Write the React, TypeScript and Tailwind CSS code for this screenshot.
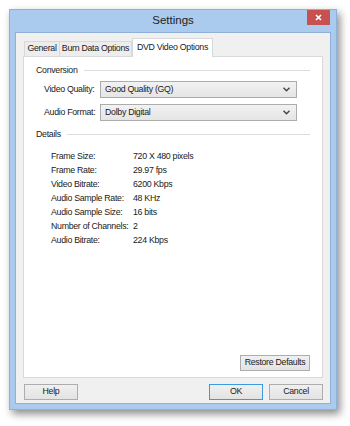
import React from "react";

const details = [
  ["Frame Size:", "720 X 480 pixels"],
  ["Frame Rate:", "29.97 fps"],
  ["Video Bitrate:", "6200 Kbps"],
  ["Audio Sample Rate:", "48 KHz"],
  ["Audio Sample Size:", "16 bits"],
  ["Number of Channels:", "2"],
  ["Audio Bitrate:", "224 Kbps"],
];

const Chevron = () => (
  <svg width="7" height="5" viewBox="0 0 7 5" className="text-[#444]">
    <path d="M0.5 0.8 L3.5 3.8 L6.5 0.8" stroke="currentColor" strokeWidth="1.4" fill="none" />
  </svg>
);

const Combo = ({ value }: { value: string }) => (
  <div className="w-[197px] h-[17px] flex items-center justify-between pl-[4px] pr-[6px] border border-[#acacac] bg-gradient-to-b from-[#f2f2f2] to-[#e5e5e5]">
    <span>{value}</span>
    <Chevron />
  </div>
);

const GroupTitle = ({ label }: { label: string }) => (
  <div className="flex items-center gap-[6px]">
    <span>{label}</span>
    <div className="flex-1 h-px bg-[#dcdcdc]" />
  </div>
);

const Button = ({ label, className = "" }: { label: string; className?: string }) => (
  <div
    className={`h-[16px] flex items-center justify-center border bg-gradient-to-b from-[#f0f0f0] to-[#e3e3e3] ${className}`}
  >
    {label}
  </div>
);

const App = () => {
  return (
    <div
      className="w-[350px] h-[426px] bg-white pt-[9px] pl-[9px] text-[8.8px] tracking-[-0.3px] text-[#1a1a1a] whitespace-nowrap"
      style={{ fontFamily: '"Liberation Sans", Arial, sans-serif' }}
    >
      <div className="w-[328px] h-[401px] bg-[#abcbee] border border-[#8fb1d8] shadow-[3px_4px_8px_rgba(0,0,0,0.45)] flex flex-col">
        <div className="h-[22px] relative flex items-center justify-center">
          <span className="text-[11.5px] tracking-normal text-[#222]">Settings</span>
          <div className="absolute right-[6px] top-0 w-[23px] h-[15px] bg-[#c75050] flex items-center justify-center">
            <svg width="7" height="7" viewBox="0 0 7 7">
              <path d="M1 1 L6 6 M6 1 L1 6" stroke="white" strokeWidth="1.6" />
            </svg>
          </div>
        </div>
        <div className="flex-1 mx-[5px] mb-[5px] bg-[#f0f0f0] border border-[#8fb1d8] flex flex-col px-[7px] pt-[5px]">
          <div className="flex items-end pl-[1px] h-[18px]">
            <div className="w-[36px] h-[15px] flex items-center justify-center border border-[#d9d9d9] border-b-0 bg-[#ededed]">
              General
            </div>
            <div className="w-[72px] h-[15px] flex items-center justify-center border border-[#d9d9d9] border-l-0 border-b-0 bg-[#ededed]">
              Burn Data Options
            </div>
            <div className="w-[81px] h-[19px] flex items-center justify-center border border-[#d9d9d9] border-b-0 bg-white -mb-px relative z-10">
              DVD Video Options
            </div>
          </div>
          <div className="h-[322px] bg-white border border-[#d9d9d9] flex flex-col px-[12px] pt-[7px] pb-[6px]">
            <GroupTitle label="Conversion" />
            <div className="flex flex-col gap-[6px] mt-[4px] pl-[8px]">
              <div className="flex items-center">
                <span className="w-[56px]">Video Quality:</span>
                <Combo value="Good Quality (GQ)" />
              </div>
              <div className="flex items-center">
                <span className="w-[56px]">Audio Format:</span>
                <Combo value="Dolby Digital" />
              </div>
            </div>
            <div className="mt-[7px]">
              <GroupTitle label="Details" />
            </div>
            <div className="flex flex-col mt-[8px] pl-[15px] leading-[14px]">
              {details.map(([k, v]) => (
                <div key={k} className="flex">
                  <span className="w-[82px]">{k}</span>
                  <span>{v}</span>
                </div>
              ))}
            </div>
            <div className="flex-1" />
            <div className="flex justify-end">
              <Button label="Restore Defaults" className="w-[70px] border-[#adadad]" />
            </div>
          </div>
          <div className="flex items-center mt-[6px] pl-[1px]">
            <Button label="Help" className="w-[54px] border-[#adadad]" />
            <div className="flex-1" />
            <Button label="OK" className="w-[54px] border-[#3c9ae0]" />
            <Button label="Cancel" className="w-[54px] border-[#adadad] ml-[6px]" />
          </div>
        </div>
      </div>
    </div>
  );
};

export default App;
